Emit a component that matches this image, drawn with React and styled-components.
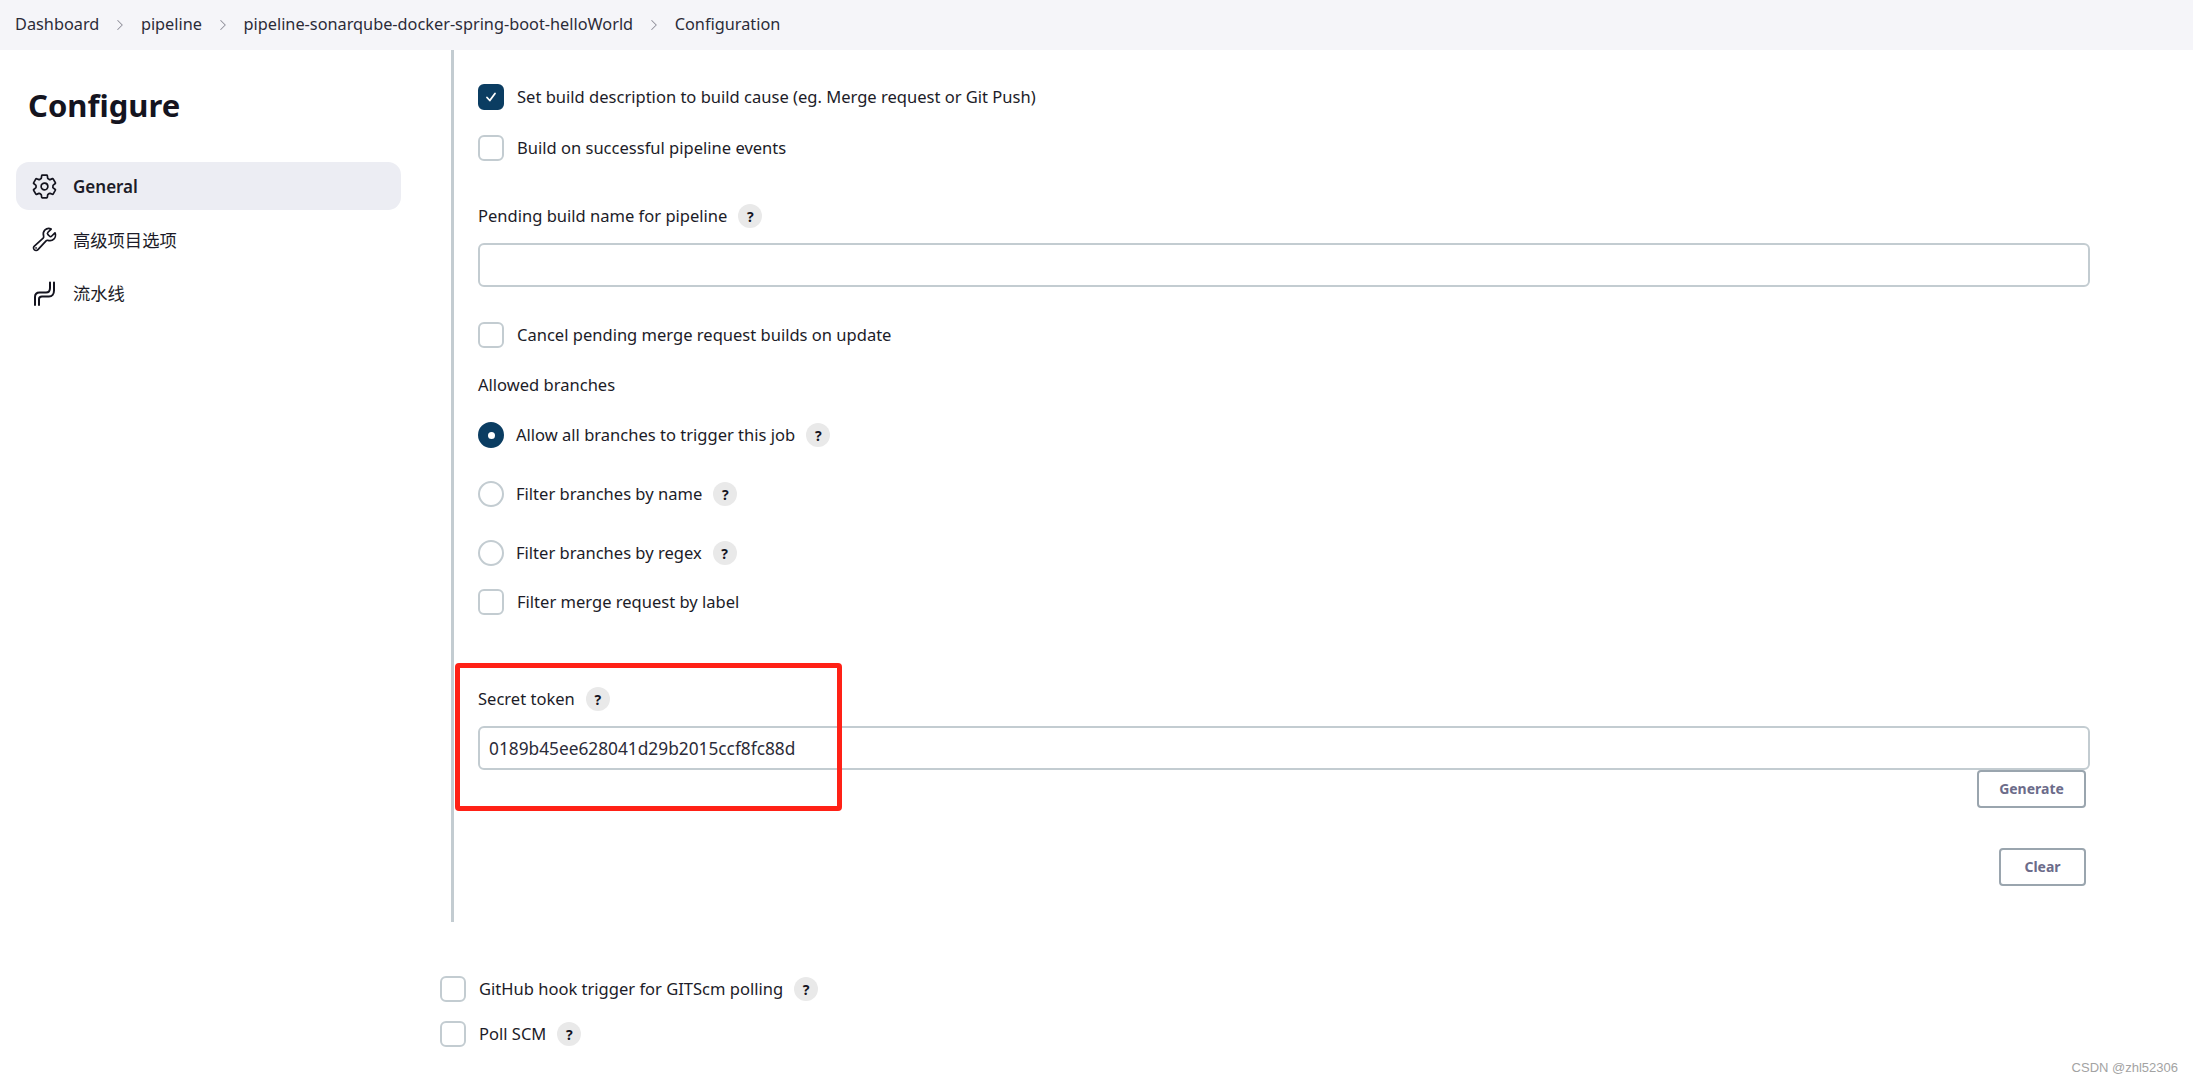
import React from 'react';
import styled, { createGlobalStyle } from 'styled-components';
import { IoSettingsOutline, IoBuildOutline } from 'react-icons/io5';
import { ChevronRight } from 'lucide-react';

const GlobalStyle = createGlobalStyle`
  html, body {
    margin: 0;
    padding: 0;
    background: #fff;
  }
  body {
    font-family: "Noto Sans", "Noto Sans CJK SC", sans-serif;
    font-size: 16.55px;
    color: #1c1c28;
    overflow: hidden;
  }
  * {
    box-sizing: border-box;
  }
`;

const Page = styled.div`
  position: relative;
  width: 2193px;
  height: 1081px;
  overflow: hidden;
`;

const Breadcrumbs = styled.nav`
  display: flex;
  align-items: center;
  height: 50px;
  padding-left: 15px;
  background: #f5f5f9;
  font-size: 16.3px;
`;

const Crumb = styled.span`
  margin-bottom: 2px;
  color: #2b2b38;
`;

const CrumbSep = styled(ChevronRight)`
  width: 18px;
  height: 18px;
  margin: 0 11.8px;
  color: #8f8f9a;
`;

const Body = styled.div`
  display: flex;
`;

const Sidebar = styled.aside`
  width: 440px;
  padding: 31px 39px 0 16px;
`;

const Title = styled.h1`
  margin: 0 0 33px 12px;
  font-size: 31px;
  line-height: 48px;
  font-weight: 700;
  color: #14141f;
`;

const NavItem = styled.div`
  display: flex;
  align-items: center;
  gap: 15px;
  height: 48px;
  margin-bottom: 5px;
  padding-left: 15px;
  border-radius: 13px;
  background: ${(p) => (p.$active ? '#ecedf3' : 'transparent')};
  font-size: ${(p) => (p.$active ? 17 : 17.3)}px;
  font-weight: ${(p) => (p.$active ? 600 : 400)};
  svg {
    width: 27px;
    height: 27px;
    flex: none;
    color: #14141f;
  }
`;

const Main = styled.main`
  flex: 1;
`;

const Section = styled.section`
  position: relative;
  width: 1650px;
  margin-left: 11px;
  padding: 34px 0 36px 24px;
  border-left: 3px solid #c3ccd1;
`;

const Row = styled.div`
  display: flex;
  align-items: center;
  height: ${(p) => p.$h || 26}px;
  margin-top: ${(p) => p.$mt || 0}px;
`;

const Label = styled.span`
  margin-bottom: 2px;
`;

const Box = styled.span`
  display: flex;
  align-items: center;
  justify-content: center;
  width: 26px;
  height: 26px;
  flex: none;
  margin-right: ${(p) => p.$gap || 13}px;
  border: 2px solid ${(p) => (p.$on ? '#0b3d62' : '#c3ccd1')};
  border-radius: ${(p) => (p.$round ? '50%' : '6px')};
  background: ${(p) => (p.$on ? '#0b3d62' : '#fff')};
`;

const Dot = styled.span`
  width: 7px;
  height: 7px;
  border-radius: 50%;
  background: #fff;
`;

const Help = styled.span`
  display: flex;
  align-items: center;
  justify-content: center;
  width: 24px;
  height: 24px;
  margin-left: 11px;
  border-radius: 50%;
  background: #e9e9e9;
  font-size: 14px;
  font-weight: 700;
  color: #14141f;
`;

const TextInput = styled.input`
  display: block;
  width: 1612px;
  height: 44px;
  margin-top: 15px;
  padding: 0 9px;
  border: 2px solid #c3ccd1;
  border-radius: 6px;
  outline: none;
  background: #fff;
  font: inherit;
  font-size: 17.3px;
  color: #2b2b38;
`;

const TokenBlock = styled.div`
  position: relative;
`;

const Highlight = styled.div`
  position: absolute;
  left: -23px;
  top: -24px;
  width: 387px;
  height: 148px;
  border: 5px solid #ff2116;
  border-radius: 4px;
  pointer-events: none;
`;

const ButtonRow = styled.div`
  display: flex;
  justify-content: flex-end;
  width: 1608px;
  margin-top: ${(p) => p.$mt}px;
`;

const Button = styled.button`
  width: ${(p) => p.$w}px;
  height: 38px;
  padding: 0 0 2px;
  border: 2px solid #9aa5ae;
  border-radius: 4px;
  background: #fff;
  font: inherit;
  font-size: 14px;
  font-weight: 700;
  color: #6c6c8a;
`;

const Triggers = styled.div`
  padding-top: 54px;
`;

const Watermark = styled.div`
  position: absolute;
  right: 15px;
  bottom: 6px;
  font-family: "Liberation Sans", sans-serif;
  font-size: 13px;
  color: #a3a3a3;
`;

const PipelineIcon = () => (
  <svg viewBox="0 0 27 27" fill="none" stroke="currentColor" strokeWidth="2" strokeLinecap="round" strokeLinejoin="round">
    <path d="M4 26V18c0-3 2-4.500 4.500-4.500H15c2.500 0 4-2 4-4.500V3.500" />
    <path d="M8 26v-6c0-1.700 1-2.500 3-2.500h7c3 0 5-2.500 5-6V3.500" />
  </svg>
);

const Check = () => (
  <svg width="14" height="14" viewBox="0 0 14 14" fill="none" stroke="#fff" strokeWidth="1.8" strokeLinecap="round" strokeLinejoin="round">
    <path d="M3 7.500l2.800 3L11 3.500" />
  </svg>
);

const crumbs = ['Dashboard', 'pipeline', 'pipeline-sonarqube-docker-spring-boot-helloWorld', 'Configuration'];

const App = () => (
  <Page>
    <GlobalStyle />
    <Breadcrumbs>
      {crumbs.map((c, i) => (
        <React.Fragment key={c}>
          {i > 0 && <CrumbSep strokeWidth={1.4} />}
          <Crumb>{c}</Crumb>
        </React.Fragment>
      ))}
    </Breadcrumbs>
    <Body>
      <Sidebar>
        <Title>Configure</Title>
        <NavItem $active>
          <IoSettingsOutline />
          General
        </NavItem>
        <NavItem>
          <IoBuildOutline />
          高级项目选项
        </NavItem>
        <NavItem>
          <PipelineIcon />
          流水线
        </NavItem>
      </Sidebar>
      <Main>
        <Section>
          <Row>
            <Box $on>
              <Check />
            </Box>
            <Label>Set build description to build cause (eg. Merge request or Git Push)</Label>
          </Row>
          <Row $mt={25}>
            <Box />
            <Label>Build on successful pipeline events</Label>
          </Row>
          <Row $mt={43} $h={24}>
            <Label>Pending build name for pipeline</Label>
            <Help>?</Help>
          </Row>
          <TextInput />
          <Row $mt={35}>
            <Box />
            <Label>Cancel pending merge request builds on update</Label>
          </Row>
          <Row $mt={25} $h={24}>
            <Label>Allowed branches</Label>
          </Row>
          <Row $mt={25}>
            <Box $round $on $gap={12}>
              <Dot />
            </Box>
            <Label>Allow all branches to trigger this job</Label>
            <Help>?</Help>
          </Row>
          <Row $mt={33}>
            <Box $round $gap={12} />
            <Label>Filter branches by name</Label>
            <Help>?</Help>
          </Row>
          <Row $mt={33}>
            <Box $round $gap={12} />
            <Label>Filter branches by regex</Label>
            <Help>?</Help>
          </Row>
          <Row $mt={23}>
            <Box />
            <Label>Filter merge request by label</Label>
          </Row>
          <TokenBlock>
            <Row $mt={72} $h={24}>
              <Label>Secret token</Label>
              <Help>?</Help>
            </Row>
            <TextInput defaultValue="0189b45ee628041d29b2015ccf8fc88d" />
            <Highlight />
          </TokenBlock>
          <ButtonRow $mt={0}>
            <Button $w={109}>Generate</Button>
          </ButtonRow>
          <ButtonRow $mt={40}>
            <Button $w={87}>Clear</Button>
          </ButtonRow>
        </Section>
        <Triggers>
          <Row>
            <Box />
            <Label>GitHub hook trigger for GITScm polling</Label>
            <Help>?</Help>
          </Row>
          <Row $mt={19}>
            <Box />
            <Label>Poll SCM</Label>
            <Help>?</Help>
          </Row>
        </Triggers>
      </Main>
    </Body>
    <Watermark>CSDN @zhl52306</Watermark>
  </Page>
);

export default App;
